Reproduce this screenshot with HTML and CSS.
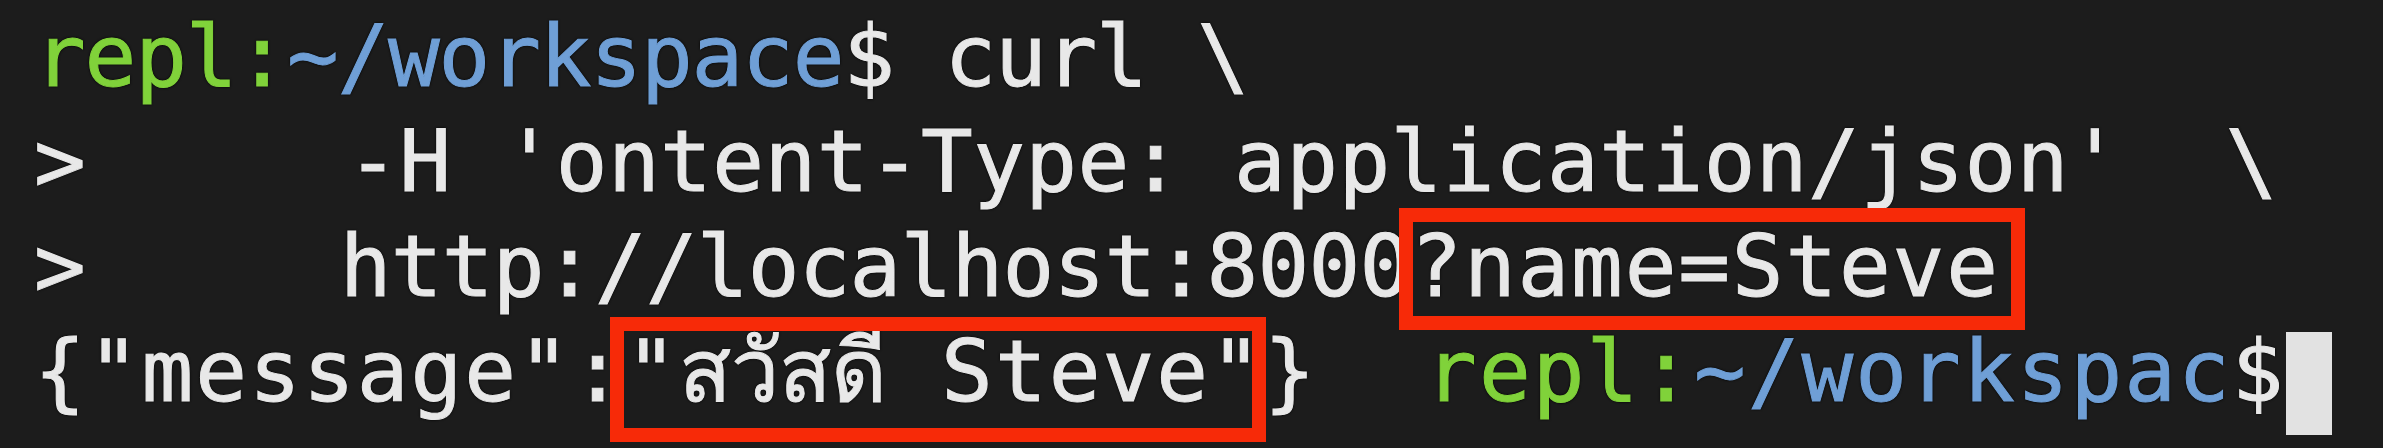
FILE: index.html
```html
<!DOCTYPE html>
<html lang="en">
<head>
<meta charset="utf-8">
<title>Terminal</title>
<link rel="stylesheet" href="styles.css">
</head>
<body>
<main class="term">
<div class="line l1"><span class="host">repl:</span><span class="path">~/workspace</span>$ curl \</div>
<div class="line l2">&gt;     -H 'ontent-Type: application/json'  \</div>
<div class="line l3">&gt;     http://localhost:8000<span class="hl hl-a">?name=Steve</span></div>
<div class="line l4">{"message":<span class="hl hl-b">"<span class="thai">สวัสดี</span> Steve"</span>}  <span class="host">repl:</span><span class="path">~/workspac</span>$<span class="cursor"></span></div>
</main>
</body>
</html>
```

FILE: styles.css
```css
html, body {
  margin: 0;
  padding: 0;
  background: #1c1c1c;
}

body {
  width: 2383px;
  height: 448px;
  overflow: hidden;
}

.term {
  display: flex;
  flex-direction: column;
  padding: 4px 0 0 34px;
  font-family: "DejaVu Sans Mono", "Liberation Mono", monospace;
  font-size: 86px;
  line-height: 105px;
  color: #e8e8e8;
  -webkit-text-stroke: 1px currentColor;
  text-shadow: 0 0 3px #000, 0 0 2px #000;
}

.line {
  white-space: pre;
  height: 105px;
}

.l1 { letter-spacing: -1.2px; }
.l2 { letter-spacing: 0.4px; }
.l3 { letter-spacing: -0.8px; }
.l4 { letter-spacing: 2px; }

.host {
  color: #80d23a;
}

.path {
  color: #6f9fd6;
}

.thai {
  letter-spacing: 0;
  font-family: "DejaVu Sans", "Noto Sans", sans-serif;
}

.hl {
  position: relative;
}

.hl-a {
  letter-spacing: 1.8px;
}

.hl::after {
  content: "";
  position: absolute;
  border: 14px solid #f72a08;
  pointer-events: none;
}

.hl-a::after {
  left: -11px;
  right: -25px;
  top: -8px;
  bottom: -14px;
}

.hl-b::after {
  left: -16px;
  right: -2px;
  top: -4px;
  bottom: -21px;
}

.cursor {
  display: inline-block;
  width: 46px;
  height: 103px;
  vertical-align: -34px;
  margin-left: 0;
  background: #e2e2e2;
}
```
